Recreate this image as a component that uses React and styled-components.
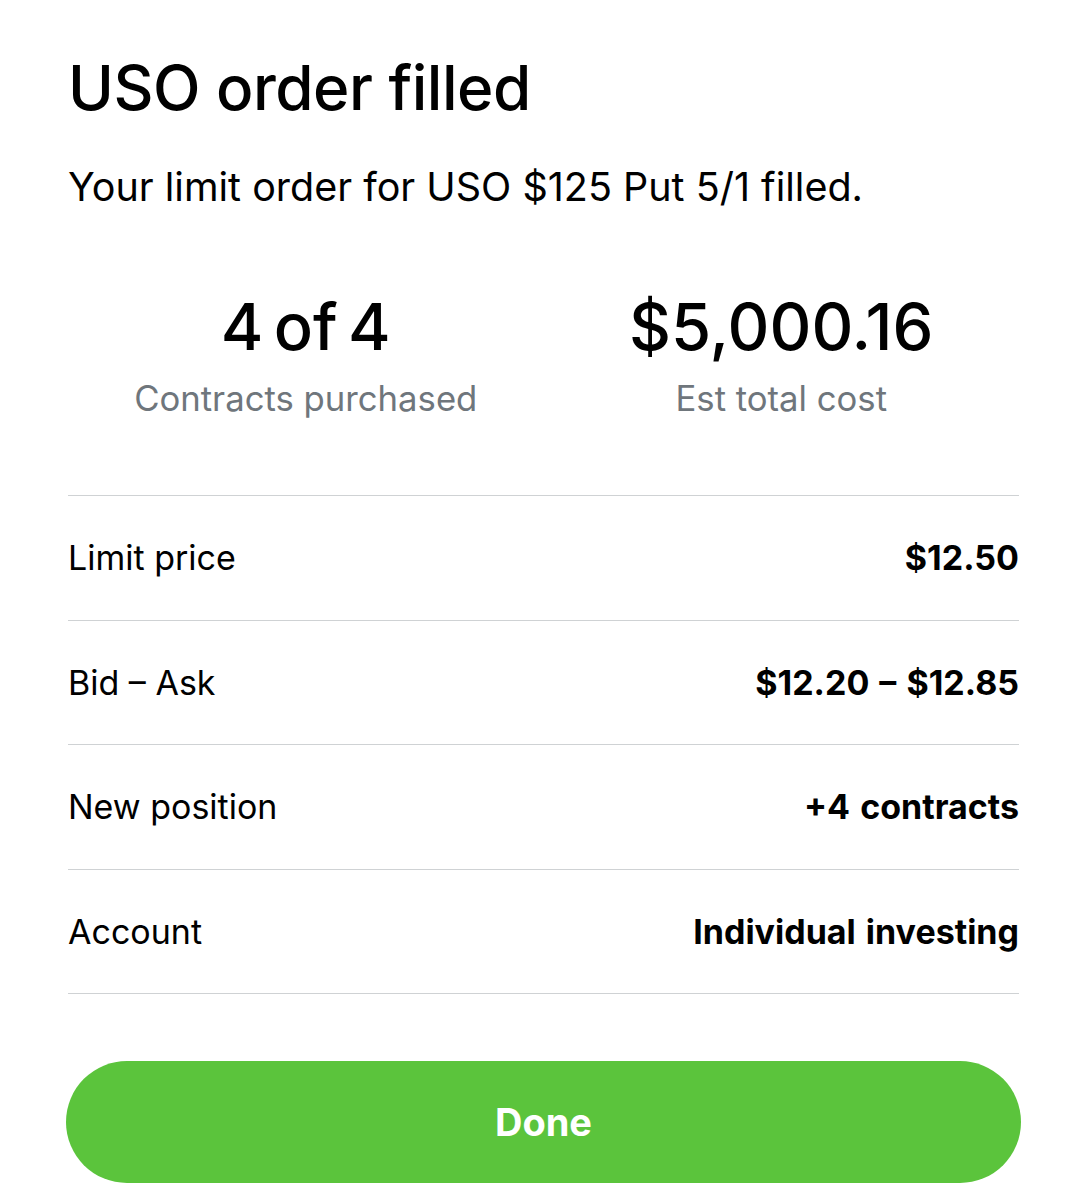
import React from "react";
import styled, { createGlobalStyle } from "styled-components";

const Global = createGlobalStyle`
  html, body { margin: 0; padding: 0; background: #ffffff; }
  body { font-family: Inter, "Noto Sans", sans-serif; color: #000; }
`;

const Page = styled.div`
  width: 1087px;
  height: 1199px;
  box-sizing: border-box;
  padding: 48px 66px 0 68px;
  display: flex;
  flex-direction: column;
  overflow: hidden;
`;

const Title = styled.h1`
  margin: 0;
  font-size: 62px;
  font-weight: 500;
  letter-spacing: -0.5px;
  line-height: 80px;
`;

const Subtitle = styled.p`
  margin: 35px 0 0;
  font-size: 39.5px;
  font-weight: 400;
  line-height: 48px;
`;

const Stats = styled.div`
  display: grid;
  grid-template-columns: 1fr 1fr;
  margin-top: 80px;
  margin-right: 2px;
`;

const Stat = styled.div`
  display: flex;
  flex-direction: column;
  align-items: center;
`;

const StatValue = styled.div`
  font-size: 65px;
  font-weight: 500;
  line-height: 72px;
  word-spacing: ${(p) => p.$wordSpacing || 0}px;
`;

const StatLabel = styled.div`
  margin-top: 14px;
  font-size: 34.7px;
  color: #6f767c;
  line-height: 42px;
`;

const List = styled.div`
  margin-top: 76px;
  margin-right: 2px;
  border-top: 1.5px solid #cfd2d4;
`;

const Row = styled.div`
  height: 124.5px;
  box-sizing: border-box;
  display: flex;
  align-items: center;
  justify-content: space-between;
  border-bottom: 1.5px solid #cfd2d4;
  font-size: 34px;
`;

const Label = styled.span`
  font-weight: 400;
`;

const Value = styled.span`
  font-weight: 700;
  word-spacing: 2px;
`;

const Button = styled.button`
  margin-top: 67px;
  margin-left: -2px;
  height: 122px;
  width: 955px;
  border: none;
  border-radius: 61px;
  background: #5bc43c;
  color: #ffffff;
  font-family: Inter, "Noto Sans", sans-serif;
  font-size: 38px;
  font-weight: 700;
`;

const rows = [
  ["Limit price", "$12.50"],
  ["Bid – Ask", "$12.20 – $12.85"],
  ["New position", "+4 contracts"],
  ["Account", "Individual investing"],
];

export default function App() {
  return (
    <>
      <Global />
      <Page>
        <Title>USO order filled</Title>
        <Subtitle>Your limit order for USO $125 Put 5/1 filled.</Subtitle>
        <Stats>
          <Stat>
            <StatValue $wordSpacing={-7}>4 of 4</StatValue>
            <StatLabel>Contracts purchased</StatLabel>
          </Stat>
          <Stat>
            <StatValue>$5,000.16</StatValue>
            <StatLabel>Est total cost</StatLabel>
          </Stat>
        </Stats>
        <List>
          {rows.map(([l, v]) => (
            <Row key={l}>
              <Label>{l}</Label>
              <Value>{v}</Value>
            </Row>
          ))}
        </List>
        <Button>Done</Button>
      </Page>
    </>
  );
}
